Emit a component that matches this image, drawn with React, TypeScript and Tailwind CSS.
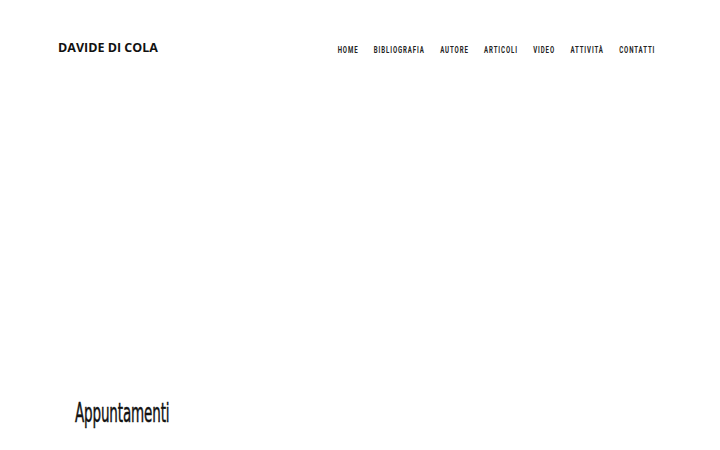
import React from 'react';

const NAV = ['HOME', 'BIBLIOGRAFIA', 'AUTORE', 'ARTICOLI', 'VIDEO', 'ATTIVITÀ', 'CONTATTI'];

const App = () => {
  return (
    <div className="w-[720px] h-[450px] bg-white overflow-hidden flex flex-col">
      {/* Header */}
      <header className="flex items-center justify-between pl-[58px] pr-[65px] pt-[42px]">
        <a className="text-[12.5px] font-bold text-[#111] leading-none" style={{ fontFamily: '"Open Sans", sans-serif' }}>
          DAVIDE DI COLA
        </a>
        <nav className="flex items-center gap-[24px] pt-[2px] origin-right scale-x-[0.64]">
          {NAV.map((item) => (
            <a
              key={item}
              className="text-[9.5px] font-bold text-[#222] tracking-[1.4px] leading-none"
              style={{ fontFamily: 'Roboto, sans-serif' }}
            >
              {item}
            </a>
          ))}
        </nav>
      </header>

      {/* Body */}
      <main className="flex-1 flex flex-col justify-end pl-[75px] pb-[24px]">
        <h2
          className="text-[26px] text-[#111] leading-none origin-left scale-x-[0.52] tracking-[-0.3px] [-webkit-text-stroke:0.5px_#111]"
          style={{ fontFamily: '"DejaVu Sans", sans-serif' }}
        >
          Appuntamenti
        </h2>
      </main>
    </div>
  );
};

export default App;
